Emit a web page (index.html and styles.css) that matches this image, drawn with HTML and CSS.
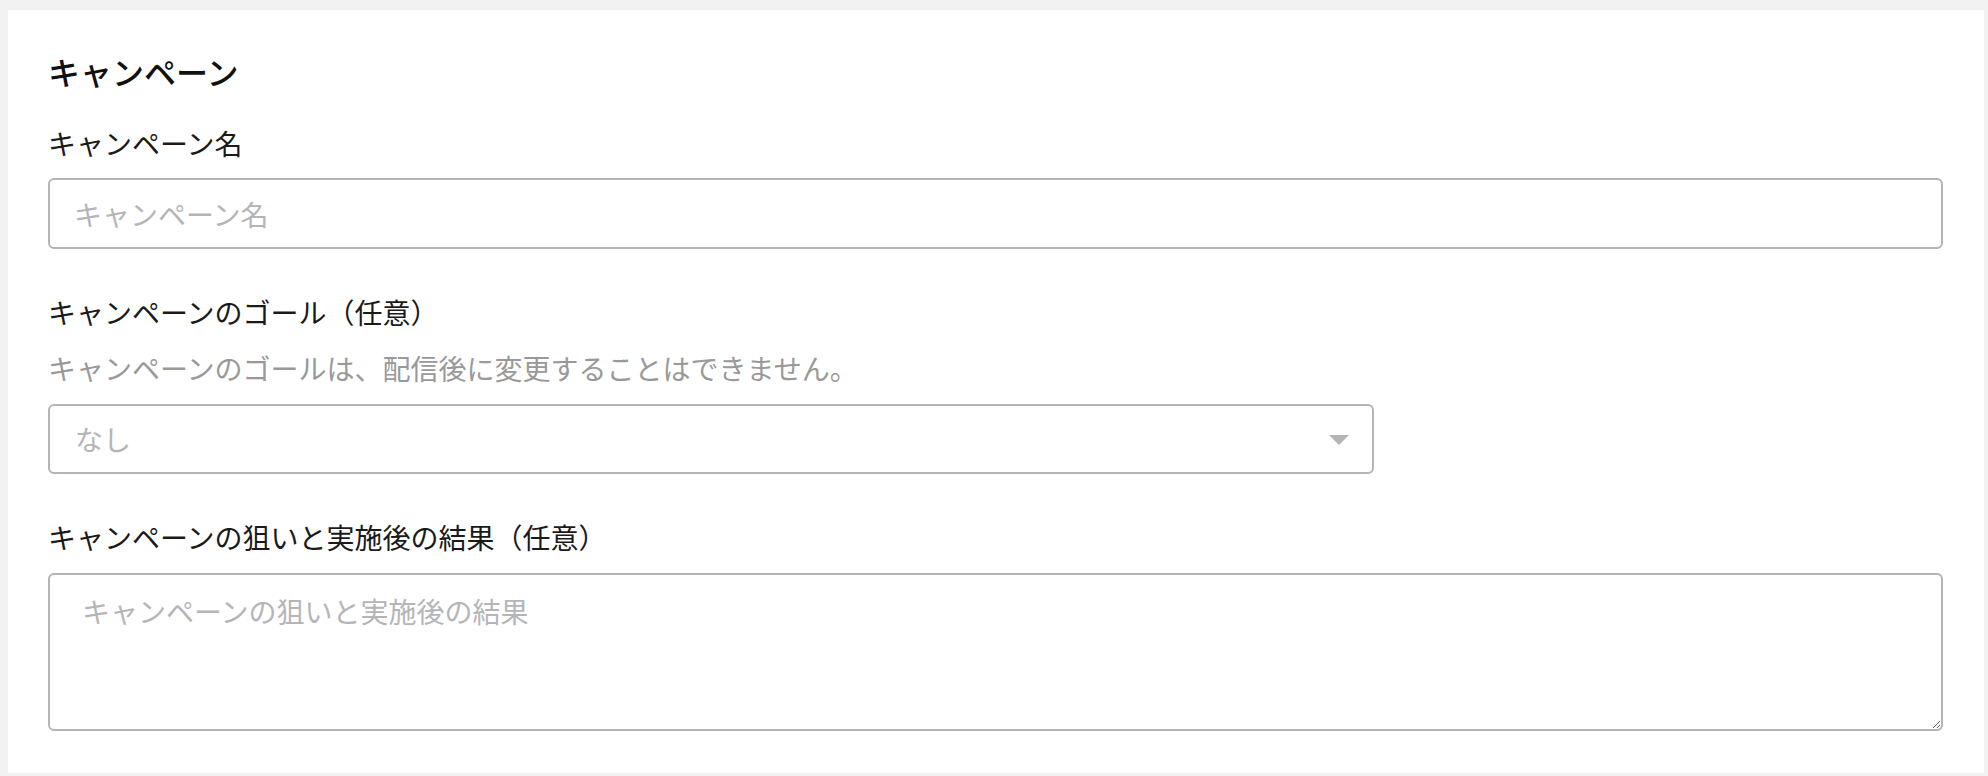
FILE: index.html
```html
<!DOCTYPE html>
<html lang="ja">
<head>
  <meta charset="UTF-8" />
  <meta name="viewport" content="width=device-width, initial-scale=1" />
  <title>キャンペーン</title>
  <link rel="stylesheet" href="styles.css">
</head>
<body>

  <div class="card">
    <h2 class="card-title">キャンペーン</h2>

    <div class="field">
      <label class="field-label" for="name">キャンペーン名</label>
      <input id="name" class="text-input" type="text" placeholder="キャンペーン名" />
    </div>

    <div class="field field-gap">
      <label class="field-label" for="goal">キャンペーンのゴール（任意）</label>
      <p class="field-hint">キャンペーンのゴールは、配信後に変更することはできません。</p>
      <div class="select-wrap">
        <select id="goal" class="select-input">
          <option>なし</option>
        </select>
        <svg class="select-arrow" width="20" height="10" viewBox="0 0 20 10">
          <path d="M0 0 L20 0 L10 10 Z" fill="#b4b4b8" />
        </svg>
      </div>
    </div>

    <div class="field field-gap">
      <label class="field-label" for="memo">キャンペーンの狙いと実施後の結果（任意）</label>
      <textarea id="memo" class="text-area" placeholder="キャンペーンの狙いと実施後の結果"></textarea>
    </div>
  </div>

</body>
</html>
```

FILE: styles.css
```css
body {
  margin: 0;
  padding: 10px 4px 2px 8px;
  background-color: #f2f2f2;
  font-family: "Noto Sans CJK JP", "Noto Sans", sans-serif;
  color: #1a1a1a;
}
.card {
  background-color: #fff;
  padding: 40px 41px 42px 40px;
}
.card-title {
  margin: 0 0 31px;
  font-size: 32px;
  line-height: 42px;
  font-weight: 500;
  color: #111;
}
.field {
  display: flex;
  flex-direction: column;
}
.field-gap {
  margin-top: 43px;
}
.field-label {
  font-size: 28px;
  line-height: 40px;
  margin-bottom: 15px;
}
.field-gap .field-label {
  margin-bottom: 16px;
}
.field-hint {
  margin: 0 0 16px;
  font-size: 28px;
  line-height: 40px;
  color: #999;
}
.text-input,
.select-input,
.text-area {
  box-sizing: border-box;
  border: 2px solid #b4b4b8;
  border-radius: 6px;
  background-color: #fff;
  font-family: inherit;
  font-size: 28px;
  color: #1a1a1a;
  outline: none;
}
.text-input {
  height: 71px;
  padding: 0 24px;
}
.text-input::placeholder,
.text-area::placeholder {
  color: #b5b5b9;
}
.select-wrap {
  position: relative;
  width: 1326px;
}
.select-input {
  width: 100%;
  height: 70px;
  padding: 0 60px 0 25px;
  appearance: none;
  -webkit-appearance: none;
  color: #b5b5b9;
}
.select-arrow {
  position: absolute;
  right: 25px;
  top: 31px;
  pointer-events: none;
}
.text-area {
  height: 158px;
  padding: 16px 32px;
  line-height: 40px;
  resize: both;
}
```
